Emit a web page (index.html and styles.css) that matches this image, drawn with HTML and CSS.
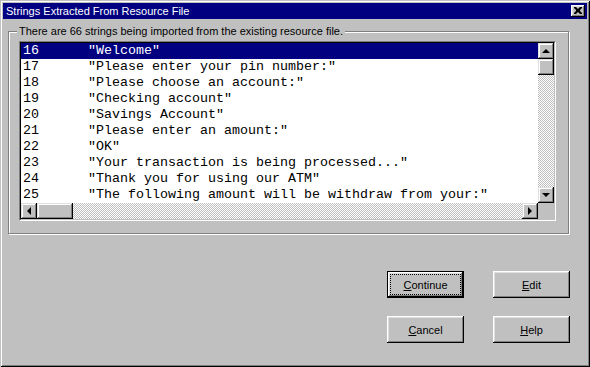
FILE: index.html
```html
<!DOCTYPE html>
<html lang="en">
<head>
  <meta charset="UTF-8" />
  <title>Strings Extracted From Resource File</title>
  <link rel="stylesheet" href="styles.css">
</head>
<body>
  <div class="window">
    <div class="titlebar">
      <span class="title">Strings Extracted From Resource File</span>
      <button class="close-btn" aria-label="Close">
        <svg width="8" height="7" viewBox="0 0 8 7"><path d="M0 0h2l2 2 2-2h2v1L6 3v1l2 2v1H6L4 5 2 7H0V6l2-2V3L0 1z" fill="#000"/></svg>
      </button>
    </div>

    <div class="body">
      <div class="group">
        <div class="group-label">There are 66 strings being imported from the existing resource file.</div>

        <div class="listbox">
          <div class="list-main">
            <ul class="rows">
              <li class="selected"><span>16</span><span>"Welcome"</span></li>
              <li><span>17</span><span>"Please enter your pin number:"</span></li>
              <li><span>18</span><span>"Please choose an account:"</span></li>
              <li><span>19</span><span>"Checking account"</span></li>
              <li><span>20</span><span>"Savings Account"</span></li>
              <li><span>21</span><span>"Please enter an amount:"</span></li>
              <li><span>22</span><span>"OK"</span></li>
              <li><span>23</span><span>"Your transaction is being processed..."</span></li>
              <li><span>24</span><span>"Thank you for using our ATM"</span></li>
              <li><span>25</span><span>"The following amount will be withdraw from your:"</span></li>
            </ul>
            <div class="vscroll">
              <div class="sb-btn"><i class="arrow up"></i></div>
              <div class="track v">
                <div class="thumb"></div>
              </div>
              <div class="sb-btn"><i class="arrow down"></i></div>
            </div>
          </div>
          <div class="hscroll-row">
            <div class="hscroll">
              <div class="sb-btn"><i class="arrow left"></i></div>
              <div class="track h">
                <div class="thumb wide"></div>
              </div>
              <div class="sb-btn"><i class="arrow right"></i></div>
            </div>
            <div class="corner"></div>
          </div>
        </div>
      </div>

      <div class="actions">
        <button class="btn default"><span class="focus"><u>C</u>ontinue</span></button>
        <button class="btn"><span><u>E</u>dit</span></button>
        <button class="btn"><span><u>C</u>ancel</span></button>
        <button class="btn"><span><u>H</u>elp</span></button>
      </div>
    </div>
  </div>
</body>
</html>
```

FILE: styles.css
```css
* {
  margin: 0;
  padding: 0;
  box-sizing: border-box;
}

body {
  font-family: "Liberation Sans", Arial, sans-serif;
  font-size: 11px;
  background: #c0c0c0;
  color: #000;
}

.window {
  width: 590px;
  height: 367px;
  padding: 3px;
  background: #c0c0c0;
  box-shadow: inset 1px 1px #c0c0c0, inset -1px -1px #000,
              inset 2px 2px #fff, inset -2px -2px #808080;
  display: flex;
  flex-direction: column;
}

.titlebar {
  height: 16px;
  background: #000080;
  color: #fff;
  display: flex;
  align-items: center;
  justify-content: space-between;
  padding: 0 2px 0 3px;
}

.title {
  line-height: 16px;
}

.close-btn {
  width: 14px;
  height: 12px;
  border: none;
  background: #c0c0c0;
  box-shadow: inset -1px -1px #000, inset 1px 1px #fff,
              inset -2px -2px #808080, inset 2px 2px #dfdfdf;
  display: flex;
  align-items: center;
  justify-content: center;
  padding-bottom: 1px;
}

.close-btn svg {
  display: block;
}

.body {
  flex-grow: 1;
  padding: 12px 0 0 5px;
}

.group {
  width: 561px;
  border: 1px solid #808080;
  box-shadow: inset 1px 1px #fff, 1px 1px 0 #fff;
  padding: 0 0 12px 10px;
}

.group-label {
  width: fit-content;
  margin: -7px 0 0 -2px;
  padding: 0 2px;
  line-height: 13px;
  background: #c0c0c0;
}

.listbox {
  margin-top: 3px;
  width: 537px;
  height: 180px;
  border: 1px solid;
  border-color: #808080 #fff #fff #808080;
  background: #fff;
}

.list-main {
  display: flex;
  border: 1px solid;
  border-color: #000 #c0c0c0 #000 #000;
  border-bottom: none;
}

.rows {
  list-style: none;
  flex-grow: 1;
  font-family: "Liberation Mono", "Courier New", monospace;
  font-size: 13.33px;
  line-height: 16px;
  height: 160px;
  overflow: hidden;
}

.rows li {
  display: grid;
  grid-template-columns: 65px 1fr;
  padding-left: 2px;
  white-space: pre;
}

.rows li.selected {
  background: #000080;
  color: #fff;
}

.vscroll {
  width: 16px;
  display: flex;
  flex-direction: column;
}

.sb-btn {
  width: 16px;
  height: 16px;
  flex-shrink: 0;
  background: #c0c0c0;
  box-shadow: inset -1px -1px #000, inset 1px 1px #dfdfdf,
              inset -2px -2px #808080, inset 2px 2px #fff;
  display: flex;
  align-items: center;
  justify-content: center;
}

.track {
  flex-grow: 1;
  display: flex;
  background: repeating-conic-gradient(#c0c0c0 0 25%, #fff 0 50%) 0 0 / 2px 2px;
}

.track.v {
  flex-direction: column;
}

.thumb {
  width: 16px;
  height: 16px;
  background: #c0c0c0;
  box-shadow: inset -1px -1px #000, inset 1px 1px #dfdfdf,
              inset -2px -2px #808080, inset 2px 2px #fff;
}

.thumb.wide {
  width: 36px;
}

.hscroll-row {
  display: flex;
  border-left: 1px solid #000;
  border-right: 1px solid #c0c0c0;
  border-bottom: 1px solid #c0c0c0;
}

.hscroll {
  flex-grow: 1;
  display: flex;
  height: 16px;
}

.corner {
  width: 16px;
  height: 16px;
  background: #c0c0c0;
}

.arrow {
  width: 0;
  height: 0;
  border: 4px solid transparent;
}

.arrow.up {
  border-bottom-color: #000;
  border-top-width: 0;
  margin-top: -1px;
}

.arrow.down {
  border-top-color: #000;
  border-bottom-width: 0;
}

.arrow.left {
  border-right-color: #000;
  border-left-width: 0;
}

.arrow.right {
  border-left-color: #000;
  border-right-width: 0;
}

.actions {
  margin: 37px 0 0 379px;
  display: grid;
  grid-template-columns: 77px 77px;
  column-gap: 29px;
  row-gap: 18px;
}

.btn {
  height: 27px;
  border: none;
  background: #c0c0c0;
  font-family: "Liberation Sans", Arial, sans-serif;
  font-size: 11px;
  color: #000;
  box-shadow: inset -1px -1px #000, inset 1px 1px #fff,
              inset -2px -2px #808080, inset 2px 2px #dfdfdf;
  display: flex;
  align-items: center;
  justify-content: center;
  padding: 4px;
}

.btn.default {
  box-shadow: inset 0 0 0 1px #000, inset -2px -2px #000, inset 2px 2px #fff,
              inset -3px -3px #808080, inset 3px 3px #dfdfdf;
}

.btn span {
  display: flex;
  align-items: center;
  justify-content: center;
  width: 100%;
  height: 100%;
}

.btn .focus {
  outline: 1px dotted #000;
}
```
